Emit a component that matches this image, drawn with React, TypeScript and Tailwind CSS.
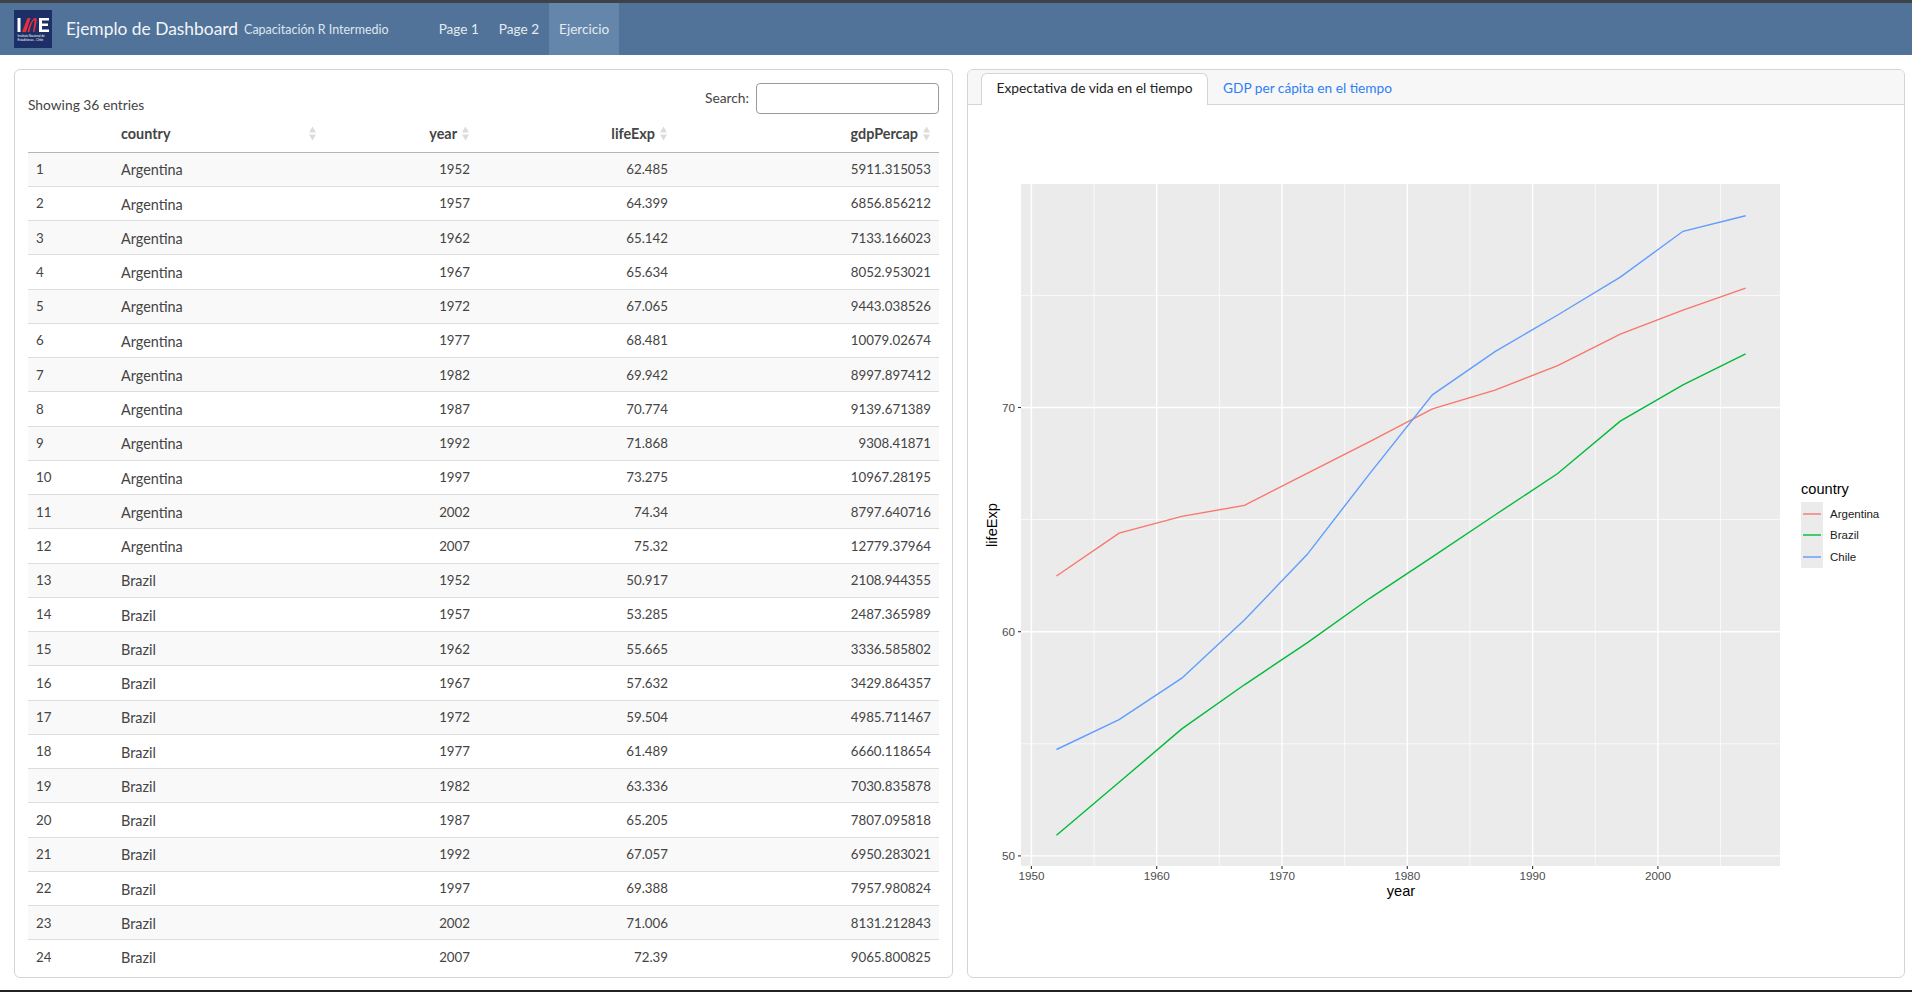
const rows: [number, string, number, string, string][] = [
  [1, 'Argentina', 1952, '62.485', '5911.315053'],
  [2, 'Argentina', 1957, '64.399', '6856.856212'],
  [3, 'Argentina', 1962, '65.142', '7133.166023'],
  [4, 'Argentina', 1967, '65.634', '8052.953021'],
  [5, 'Argentina', 1972, '67.065', '9443.038526'],
  [6, 'Argentina', 1977, '68.481', '10079.02674'],
  [7, 'Argentina', 1982, '69.942', '8997.897412'],
  [8, 'Argentina', 1987, '70.774', '9139.671389'],
  [9, 'Argentina', 1992, '71.868', '9308.41871'],
  [10, 'Argentina', 1997, '73.275', '10967.28195'],
  [11, 'Argentina', 2002, '74.34', '8797.640716'],
  [12, 'Argentina', 2007, '75.32', '12779.37964'],
  [13, 'Brazil', 1952, '50.917', '2108.944355'],
  [14, 'Brazil', 1957, '53.285', '2487.365989'],
  [15, 'Brazil', 1962, '55.665', '3336.585802'],
  [16, 'Brazil', 1967, '57.632', '3429.864357'],
  [17, 'Brazil', 1972, '59.504', '4985.711467'],
  [18, 'Brazil', 1977, '61.489', '6660.118654'],
  [19, 'Brazil', 1982, '63.336', '7030.835878'],
  [20, 'Brazil', 1987, '65.205', '7807.095818'],
  [21, 'Brazil', 1992, '67.057', '6950.283021'],
  [22, 'Brazil', 1997, '69.388', '7957.980824'],
  [23, 'Brazil', 2002, '71.006', '8131.212843'],
  [24, 'Brazil', 2007, '72.39', '9065.800825'],
]

const years = [1952, 1957, 1962, 1967, 1972, 1977, 1982, 1987, 1992, 1997, 2002, 2007]
const argentina = [62.485, 64.399, 65.142, 65.634, 67.065, 68.481, 69.942, 70.774, 71.868, 73.275, 74.34, 75.32]
const brazil = [50.917, 53.285, 55.665, 57.632, 59.504, 61.489, 63.336, 65.205, 67.057, 69.388, 71.006, 72.39]
const chile = [54.745, 56.074, 57.924, 60.523, 63.441, 67.052, 70.565, 72.492, 74.126, 75.816, 77.86, 78.553]

const px = (year: number) => 1032.4 + (year - 1950) * 12.53
const py = (value: number) => 855.9 - (value - 50) * 22.42
const linePoints = (values: number[]) =>
  values.map((v, i) => `${px(years[i]).toFixed(1)},${py(v).toFixed(1)}`).join(' ')

function SortIcon() {
  return (
    <svg width="9" height="15" viewBox="0 0 9 15" className="shrink-0">
      <path d="M4.5 0.5 L8 6.5 H1 Z" fill="#dcdcdc" />
      <path d="M4.5 14.5 L8 8.5 H1 Z" fill="#dcdcdc" />
    </svg>
  )
}

function Logo() {
  return (
    <svg width="38" height="38" viewBox="0 0 38 38" className="shrink-0">
      <rect width="38" height="38" fill="#1c2f66" />
      <rect x="3.5" y="8" width="3" height="14" fill="#ffffff" />
      <path d="M8 22 L13.5 8 L16.5 8 L12 22 Z" fill="#e8313c" />
      <path d="M13.5 22 C15 15 18 9 21 8 C23 8 23 10 22.5 12 L20.5 22 L19 22 L20.5 12 C20.8 10.5 20.5 10 19.8 10.5 C18 12 16.5 17 15.5 22 Z" fill="#e8313c" />
      <path d="M25 8 H35 V10.5 H28 V13.5 H34 V16 H28 V19.5 H35 V22 H25 Z" fill="#ffffff" />
      <text x="3.5" y="27" fontSize="3" fill="#ffffff" fontFamily="Liberation Sans, sans-serif">Instituto Nacional de</text>
      <text x="3.5" y="31" fontSize="3" fill="#ffffff" fontFamily="Liberation Sans, sans-serif">Estadísticas - Chile</text>
    </svg>
  )
}

function Navbar() {
  return (
    <nav className="h-[52px] bg-[#51739a] flex items-center pl-[14px] text-white shrink-0">
      <Logo />
      <span className="ml-[14px] text-[17.4px] text-[#f2f5f8]">Ejemplo de Dashboard</span>
      <span className="ml-[6px] mt-[2px] text-[12.5px] text-[#dfe6ee]">Capacitación R Intermedio</span>
      <div className="ml-[40px] flex h-full text-[13.6px] text-[#e4eaf1]">
        <a className="h-full flex items-center px-[10px]">Page 1</a>
        <a className="h-full flex items-center px-[10px]">Page 2</a>
        <a className="h-full flex items-center px-[10px] bg-[#6586ab]">Ejercicio</a>
      </div>
    </nav>
  )
}

function DataTable() {
  return (
    <div className="w-[939px] h-[909px] border border-[#d4d4d4] rounded-md px-[13px] overflow-hidden">
      <div className="h-[48px] pt-[13px] flex items-start justify-between">
        <span className="mt-[12px] text-[13.8px]">Showing 36 entries</span>
        <label className="flex items-center gap-[7px] text-[13.8px]">
          Search:
          <input className="w-[183px] h-[31px] border border-[#9a9a9a] rounded-[4px] bg-white" />
        </label>
      </div>
      <table className="w-[911px] table-fixed">
        <colgroup>
          <col className="w-[85px]" />
          <col className="w-[212px]" />
          <col className="w-[153px]" />
          <col className="w-[198px]" />
          <col className="w-[263px]" />
        </colgroup>
        <thead>
          <tr className="h-[34px] border-b border-[#b5b5b5]">
            <th></th>
            <th className="px-2 pb-[2px]">
              <div className="flex items-center justify-between font-bold">country<SortIcon /></div>
            </th>
            <th className="px-2 pb-[2px]">
              <div className="flex items-center justify-end gap-[4px] font-bold">year<SortIcon /></div>
            </th>
            <th className="px-2 pb-[2px]">
              <div className="flex items-center justify-end gap-[4px] font-bold">lifeExp<SortIcon /></div>
            </th>
            <th className="px-2 pb-[2px]">
              <div className="flex items-center justify-end gap-[4px] font-bold">gdpPercap<SortIcon /></div>
            </th>
          </tr>
        </thead>
        <tbody>
          {rows.map(([id, country, year, life, gdp]) => (
            <tr key={id} className="h-[34.25px] border-b border-[#dddddd] last:border-b-0 odd:bg-[#f9f9f9]">
              <td className="px-2 pt-[2px] text-[13.3px]">{id}</td>
              <td className="px-2 pt-[2px]">{country}</td>
              <td className="px-2 pt-[2px] text-right text-[13.3px]">{year}</td>
              <td className="px-2 pt-[2px] text-right text-[13.3px]">{life}</td>
              <td className="px-2 pt-[2px] text-right text-[13.3px]">{gdp}</td>
            </tr>
          ))}
        </tbody>
      </table>
    </div>
  )
}

function Chart() {
  const font = 'Liberation Sans, Arial, sans-serif'
  return (
    <svg width="936" height="870" viewBox="969 105 936 870" className="block" fontFamily={font}>
      <rect x="1022" y="184" width="759" height="682" fill="#ebebeb" />
      {[1955, 1965, 1975, 1985, 1995, 2005].map((y) => (
        <line key={y} x1={px(y)} x2={px(y)} y1="184" y2="866" stroke="#ffffff" strokeWidth="0.7" />
      ))}
      {[55, 65, 75].map((v) => (
        <line key={v} x1="1022" x2="1781" y1={py(v)} y2={py(v)} stroke="#ffffff" strokeWidth="0.7" />
      ))}
      {[1950, 1960, 1970, 1980, 1990, 2000].map((y) => (
        <g key={y}>
          <line x1={px(y)} x2={px(y)} y1="184" y2="866" stroke="#ffffff" strokeWidth="1.4" />
          <line x1={px(y)} x2={px(y)} y1="866" y2="869" stroke="#333333" strokeWidth="1.1" />
          <text x={px(y)} y="880" textAnchor="middle" fontSize="11.7" fill="#4d4d4d">{y}</text>
        </g>
      ))}
      {[50, 60, 70].map((v) => (
        <g key={v}>
          <line x1="1022" x2="1781" y1={py(v)} y2={py(v)} stroke="#ffffff" strokeWidth="1.4" />
          <line x1="1019" x2="1022" y1={py(v)} y2={py(v)} stroke="#333333" strokeWidth="1.1" />
          <text x="1016" y={py(v) + 4} textAnchor="end" fontSize="11.7" fill="#4d4d4d">{v}</text>
        </g>
      ))}
      <polyline points={linePoints(argentina)} fill="none" stroke="#F8766D" strokeWidth="1.4" />
      <polyline points={linePoints(brazil)} fill="none" stroke="#00BA38" strokeWidth="1.4" />
      <polyline points={linePoints(chile)} fill="none" stroke="#619CFF" strokeWidth="1.4" />
      <text x="1402" y="896" textAnchor="middle" fontSize="14.6" fill="#000000">year</text>
      <text transform="translate(998 525) rotate(-90)" textAnchor="middle" fontSize="14.6" fill="#000000">lifeExp</text>
      <text x="1802" y="494" fontSize="14.6" fill="#000000">country</text>
      <rect x="1802" y="502" width="22" height="66" fill="#ebebeb" />
      <line x1="1804" x2="1822" y1="514" y2="514" stroke="#F8766D" strokeWidth="1.4" />
      <line x1="1804" x2="1822" y1="535" y2="535" stroke="#00BA38" strokeWidth="1.4" />
      <line x1="1804" x2="1822" y1="557" y2="557" stroke="#619CFF" strokeWidth="1.4" />
      <text x="1831" y="518" fontSize="11.5" fill="#1a1a1a">Argentina</text>
      <text x="1831" y="539" fontSize="11.5" fill="#1a1a1a">Brazil</text>
      <text x="1831" y="561" fontSize="11.5" fill="#1a1a1a">Chile</text>
    </svg>
  )
}

function ChartCard() {
  return (
    <div className="w-[938px] h-[909px] border border-[#d4d4d4] rounded-md overflow-hidden">
      <div className="h-[35px] pt-[3px] pl-[13px] flex bg-[#f7f7f7] border-b border-[#d4d4d4]">
        <div className="h-[32px] w-[227px] pb-[2px] flex items-center justify-center bg-white border border-b-0 border-[#d4d4d4] rounded-t-md text-[13.8px] text-[#222222]">
          Expectativa de vida en el tiempo
        </div>
        <div className="h-[32px] pb-[2px] ml-[15px] flex items-center text-[13.7px] text-[#2f80f5]">GDP per cápita en el tiempo</div>
      </div>
      <Chart />
    </div>
  )
}

export default function App() {
  return (
    <div className="h-[992px] overflow-hidden bg-white flex flex-col text-[14.4px] text-[#444444] [font-family:Lato,'Noto_Sans',sans-serif]">
      <div className="h-[3px] bg-[#3f4347] shrink-0" />
      <Navbar />
      <main className="flex-1 flex gap-[14px] pl-[14px] pt-[14px]">
        <DataTable />
        <ChartCard />
      </main>
      <div className="h-[2px] bg-[#222222] shrink-0" />
    </div>
  )
}
